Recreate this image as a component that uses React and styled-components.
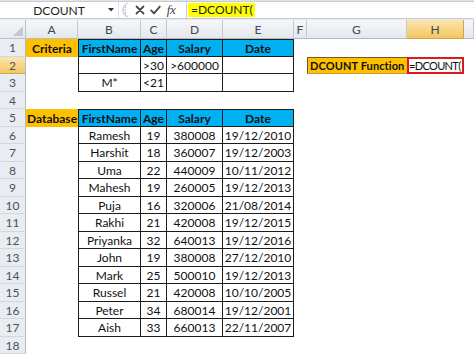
import React from 'react';
import styled, { createGlobalStyle, css } from 'styled-components';

const GlobalStyle = createGlobalStyle`
  html, body { margin: 0; padding: 0; background: #fff; }
  body { font-family: Lato, "Open Sans", sans-serif; overflow: hidden; }
  #root { width: 474px; height: 354px; overflow: hidden; }
`;

const COL_WIDTHS = [26, 52, 63, 26, 56, 71, 13, 100, 57, 10];
const COL_LETTERS = ['A', 'B', 'C', 'D', 'E', 'F', 'G', 'H', 'I'];
const ROW_HEIGHTS = [18, 17, 18, 17, 18, 17, 18, 17, 18, 17, 18, 17, 18, 17, 18, 17, 18, 17];

const people = [
  ['Ramesh', 19, 380008, '19/12/2010'],
  ['Harshit', 18, 360007, '19/12/2003'],
  ['Uma', 22, 440009, '10/11/2012'],
  ['Mahesh', 19, 260005, '19/12/2013'],
  ['Puja', 16, 320006, '21/08/2014'],
  ['Rakhi', 21, 420008, '19/12/2015'],
  ['Priyanka', 32, 640013, '19/12/2016'],
  ['John', 19, 380008, '27/12/2010'],
  ['Mark', 25, 500010, '19/12/2013'],
  ['Russel', 21, 420008, '10/10/2005'],
  ['Peter', 34, 680014, '19/12/2001'],
  ['Aish', 33, 660013, '22/11/2007'],
];

// cell map: key "r,c" with c = 1..9 (A..I)
function buildCells() {
  const m = {};
  const set = (r, c, v) => { m[`${r},${c}`] = v; };
  const headers = ['FirstName', 'Age', 'Salary', 'Date'];
  set(1, 1, { text: 'Criteria', fill: 'orange', bold: true });
  set(5, 1, { text: 'Database', fill: 'orange', bold: true });
  [1, 5].forEach((r) => headers.forEach((h, i) => set(r, 2 + i, { text: h, fill: 'blue', bold: true, boxed: true, top: true, left: i === 0 })));
  const crit = [['', '>30', '>600000', ''], ['M*', '<21', '', '']];
  crit.forEach((row, ri) => row.forEach((v, i) => set(2 + ri, 2 + i, { text: v, boxed: true, left: i === 0 })));
  people.forEach((p, pi) => p.forEach((v, i) => set(6 + pi, 2 + i, { text: String(v), boxed: true, left: i === 0 })));
  set(2, 7, { text: 'DCOUNT Function', fill: 'orange', bold: true, align: 'left', edge: true, small: true, spacing: 0.1 });
  set(2, 8, { text: '=DCOUNT(', align: 'left', active: true, small: true, spacing: -0.65 });
  return m;
}
const CELLS = buildCells();

const Window = styled.div`
  width: 474px;
  height: 354px;
  display: flex;
  flex-direction: column;
  background: #fff;
  overflow: hidden;
`;

const TopStrip = styled.div`
  height: 2px;
  background: #dfe4ea;
`;

const FormulaBar = styled.div`
  display: flex;
  align-items: stretch;
  height: 16px;
  border-top: 1px solid #c5ccd5;
  border-bottom: 1px solid #c5ccd5;
  background: #fff;
  font-size: 12px;
  color: #1e1e1e;
`;

const NameBox = styled.div`
  width: 118px;
  display: flex;
  align-items: center;
  border-right: 1px solid #dde2e8;
`;

const NameText = styled.span`
  flex: 1;
  text-align: center;
  padding-left: 10px;
`;

const Controls = styled.div`
  width: 67px;
  display: flex;
  align-items: center;
  color: #555;
`;

const IconSlot = styled.span`
  display: inline-flex;
  align-items: center;
  justify-content: center;
  width: ${(p) => p.$w}px;
  height: 16px;
`;

const Fx = styled.span`
  font-family: "Liberation Serif", serif;
  font-style: italic;
  font-size: 13px;
  color: #444;
  letter-spacing: -0.5px;
`;

const FormulaInput = styled.div`
  flex: 1;
  display: flex;
  align-items: center;
  border-left: 1px solid #c5ccd5;
  padding-left: 1px;
`;

const Highlight = styled.span`
  background: #ffff00;
  height: 14px;
  line-height: 14px;
  padding: 0 2px 0 3px;
`;

const Gap = styled.div`
  height: 1px;
  background: #e6e9ee;
`;

const Sheet = styled.div`
  display: grid;
  grid-template-columns: ${COL_WIDTHS.map((w) => `${w}px`).join(' ')};
  grid-template-rows: 19px ${ROW_HEIGHTS.map((h) => `${h}px`).join(' ')};
  font-size: 12px;
`;

const headerBase = css`
  display: flex;
  align-items: center;
  justify-content: center;
  color: #3f4654;
  font-size: 12px;
  box-sizing: border-box;
  overflow: hidden;
`;

const Corner = styled.div`
  ${headerBase};
  position: relative;
  background: linear-gradient(#f6f7f9, #e7eaee);
  border-right: 1px solid #b9c0ca;
  border-bottom: 1px solid #b9c0ca;
`;

const CornerMark = styled.svg`
  position: absolute;
  right: 2px;
  bottom: 2px;
`;

const ColHeader = styled.div`
  ${headerBase};
  background: ${(p) => (p.$active ? 'linear-gradient(#fbe6b0, #f4c663)' : 'linear-gradient(#f6f7f9, #e4e8ed)')};
  border-right: 1px solid ${(p) => (p.$active ? '#d9a54c' : '#c3c9d2')};
  border-bottom: 1px solid ${(p) => (p.$active ? '#d9a54c' : '#b3bbc6')};
`;

const RowHeader = styled.div`
  ${headerBase};
  background: ${(p) => (p.$active ? 'linear-gradient(#fbe6b0, #f4c663)' : '#e9ecf0')};
  border-right: 1px solid #b3bbc6;
  border-bottom: 1px solid ${(p) => (p.$active ? '#d9a54c' : '#d3d8df')};
  color: #4a5362;
`;

const FILLS = { orange: '#ffc000', blue: '#00b0f0' };

const Cell = styled.div`
  box-sizing: border-box;
  display: flex;
  align-items: center;
  justify-content: ${(p) => (p.$align === 'left' ? 'flex-start' : 'center')};
  padding: ${(p) => (p.$align === 'left' ? '0 0 0 2px' : '0')};
  white-space: nowrap;
  overflow: hidden;
  background: ${(p) => FILLS[p.$fill] || '#fff'};
  font-weight: ${(p) => (p.$bold ? 700 : 400)};
  color: #111;
  ${(p) => p.$small && css`
    font-size: 11px;
    letter-spacing: ${p.$spacing || 0}px;
  `}
  ${(p) => p.$boxed && css`
    border-right: 1px solid #1c1c1c;
    border-bottom: 1px solid #1c1c1c;
  `}
  ${(p) => p.$top && css`border-top: 1px solid #1c1c1c;`}
  ${(p) => p.$left && css`border-left: 1px solid #1c1c1c;`}
  ${(p) => p.$edge && css`
    border-top: 1px solid #6b5a2a;
    border-left: 1px solid #6b5a2a;
    border-bottom: 1px solid #c89a20;
  `}
  ${(p) => p.$active && css`
    border: 2px solid #e3161b;
    padding-left: 0;
  `}
`;

const CloseIcon = () => (
  <svg width="10" height="10" viewBox="0 0 10 10">
    <path d="M1.5 1.5 L8.5 8.5 M8.5 1.5 L1.5 8.5" stroke="#4a4a4a" strokeWidth="1.8" strokeLinecap="round" />
  </svg>
);

const CheckIcon = () => (
  <svg width="11" height="10" viewBox="0 0 11 10">
    <path d="M1.2 5.4 L4 8.3 L9.8 1.6" stroke="#4a4a4a" strokeWidth="1.9" fill="none" strokeLinecap="round" strokeLinejoin="round" />
  </svg>
);

const DropArrow = () => (
  <svg width="6" height="4" viewBox="0 0 6 4" style={{ marginRight: 4 }}>
    <path d="M0 0 H6 L3 3.5 Z" fill="#333" />
  </svg>
);

const Splitter = () => (
  <svg width="8" height="16" viewBox="0 0 8 16">
    <path d="M6.5 1 C3 3 2 6 2 8 C2 10 3 13 6.5 15" stroke="#c9ced6" strokeWidth="1.4" fill="none" />
    <circle cx="4.5" cy="5" r="0.7" fill="#9aa2ad" />
    <circle cx="4" cy="8" r="0.7" fill="#9aa2ad" />
    <circle cx="4.5" cy="11" r="0.7" fill="#9aa2ad" />
  </svg>
);

export default function App() {
  const rows = ROW_HEIGHTS.map((_, i) => i + 1);
  return (
    <>
      <GlobalStyle />
      <Window>
        <TopStrip />
        <FormulaBar>
          <NameBox>
            <NameText>DCOUNT</NameText>
            <DropArrow />
          </NameBox>
          <Controls>
            <IconSlot $w={12}><Splitter /></IconSlot>
            <IconSlot $w={17}><CloseIcon /></IconSlot>
            <IconSlot $w={15}><CheckIcon /></IconSlot>
            <IconSlot $w={16}><Fx>fx</Fx></IconSlot>
          </Controls>
          <FormulaInput>
            <Highlight>=DCOUNT(</Highlight>
          </FormulaInput>
        </FormulaBar>
        <Gap />
        <Sheet>
          <Corner>
            <CornerMark width="10" height="10" viewBox="0 0 10 10">
              <path d="M10 0 V10 H0 Z" fill="#c3c8cf" />
            </CornerMark>
          </Corner>
          {COL_LETTERS.map((l) => (
            <ColHeader key={l} $active={l === 'H'}>{l === 'I' ? '' : l}</ColHeader>
          ))}
          {rows.map((r) => (
            <React.Fragment key={r}>
              <RowHeader $active={r === 2}>{r}</RowHeader>
              {COL_LETTERS.map((l, ci) => {
                const c = CELLS[`${r},${ci + 1}`];
                if (!c) return <Cell key={l} />;
                return (
                  <Cell
                    key={l}
                    $fill={c.fill}
                    $bold={c.bold}
                    $align={c.align}
                    $boxed={c.boxed}
                    $top={c.top}
                    $left={c.left}
                    $edge={c.edge}
                    $active={c.active}
                    $small={c.small}
                    $spacing={c.spacing}
                  >
                    {c.text}
                  </Cell>
                );
              })}
            </React.Fragment>
          ))}
        </Sheet>
      </Window>
    </>
  );
}
